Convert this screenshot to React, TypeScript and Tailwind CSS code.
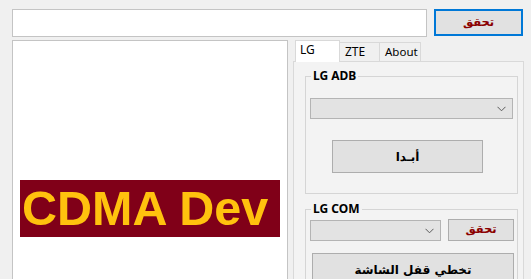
import React from "react";

const ui = { fontFamily: '"Noto Sans", "DejaVu Sans", sans-serif' };
const ar = { fontFamily: '"DejaVu Sans", "Noto Sans", sans-serif' };

function Chevron() {
  return (
    <svg width="9" height="6" viewBox="0 0 9 6" className="shrink-0">
      <path d="M0.5 0.8 L4.5 4.8 L8.5 0.8" fill="none" stroke="#5a5a5a" strokeWidth="1" />
    </svg>
  );
}

function Combo({ w }: { w: string }) {
  return (
    <div className={`${w} h-[21px] border border-[#b4b4b4] bg-[#e3e3e3] flex items-center justify-end pr-[6px]`}>
      <Chevron />
    </div>
  );
}

export default function App() {
  return (
    <div className="w-[531px] h-[279px] overflow-hidden bg-[#f0f0f0] text-black" style={ui}>
      {/* top row */}
      <div className="flex items-start pt-[9px] pl-[12px]">
        <div className="w-[415px] h-[28px] bg-white border border-[#c4c4c4]" />
        <div
          className="ml-[7px] w-[89px] h-[27px] border-2 border-[#0078d7] bg-[#e1e1e1] flex items-center justify-center text-[11.5px] font-bold text-[#8b0000]"
          style={ar}
          dir="rtl"
        >
          تحقق
        </div>
      </div>

      {/* main row */}
      <div className="flex items-start mt-[3px] pl-[12px]">
        {/* left panel */}
        <div className="w-[276px] h-[260px] bg-white border border-[#c4c4c4] pt-[139px] pl-[7px]">
          <div
            className="w-[260px] h-[57px] bg-[#800018] text-[#ffc20e] font-bold text-[48.5px] leading-[57px] pl-[2px] whitespace-nowrap"
            style={{ fontFamily: '"Liberation Sans", Arial, sans-serif' }}
          >
            CDMA Dev
          </div>
        </div>

        {/* tab control */}
        <div className="ml-[5px] w-[231px] flex flex-col">
          <div className="flex items-end h-[22px] pl-[2px] text-[12px]">
            <div className="relative z-10 w-[45px] h-[22px] bg-white border border-b-0 border-[#d9d9d9] pl-[4px] pt-[1px] leading-[16px]">
              LG
            </div>
            <div className="w-[40px] h-[20px] bg-[#f0f0f0] border border-l-0 border-b-0 border-[#d9d9d9] pl-[5px] leading-[18px]">
              ZTE
            </div>
            <div className="w-[41px] h-[20px] bg-[#f0f0f0] border border-l-0 border-b-0 border-[#d9d9d9] pl-[5px] leading-[18px] text-[11.5px]">
              About
            </div>
          </div>
          <div className="-mt-[1px] h-[240px] border border-[#d9d9d9] bg-[#f3f3f3] pt-[14px] pl-[11px] pr-[5px]">
            {/* group LG ADB */}
            <div className="relative w-[213px] h-[118px] border border-[#d5d5d5] pt-[21px] pl-[4px]">
              <span className="absolute -top-[9px] left-[5px] px-[2px] bg-[#f3f3f3] text-[12px] font-bold leading-[16px]">
                LG ADB
              </span>
              <Combo w="w-[203px]" />
              <div
                className="mt-[21px] ml-[22px] w-[151px] h-[33px] border border-[#adadad] bg-[#e1e1e1] flex items-center justify-center text-[12px] font-bold"
                style={ar}
                dir="rtl"
              >
                أبـدا
              </div>
            </div>

            {/* group LG COM */}
            <div className="relative mt-[15px] w-[213px] h-[80px] border border-[#d5d5d5] border-b-0 pt-[10px] pl-[4px]">
              <span className="absolute -top-[9px] left-[5px] px-[2px] bg-[#f3f3f3] text-[12px] font-bold leading-[16px]">
                LG COM
              </span>
              <div className="flex items-start">
                <Combo w="w-[131px]" />
                <div
                  className="ml-[7px] -mt-[1px] w-[66px] h-[22px] border border-[#adadad] bg-[#e1e1e1] flex items-center justify-center text-[11.5px] font-bold text-[#8b0000]"
                  style={ar}
                  dir="rtl"
                >
                  تحقق
                </div>
              </div>
              <div
                className="mt-[12px] ml-[2px] w-[202px] h-[33px] border border-[#adadad] bg-[#e1e1e1] flex items-center justify-center text-[12px] font-bold"
                style={ar}
                dir="rtl"
              >
                تخطي قفل الشاشة
              </div>
            </div>
          </div>
        </div>
      </div>
    </div>
  );
}
